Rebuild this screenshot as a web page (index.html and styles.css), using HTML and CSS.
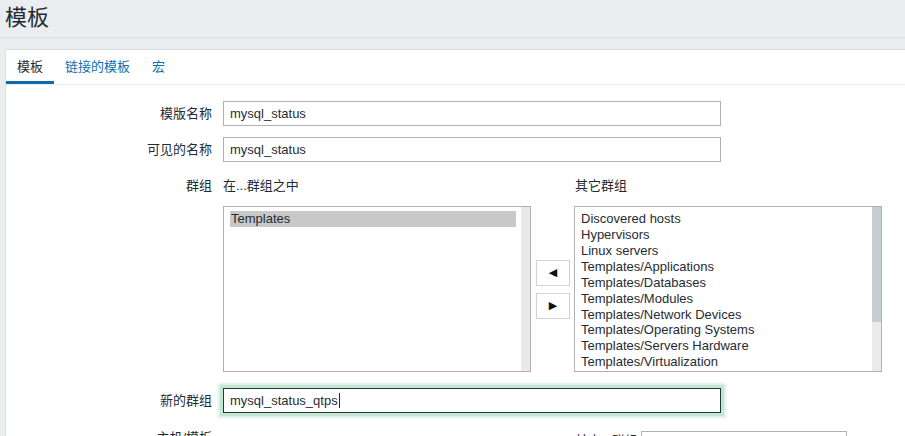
FILE: index.html
```html
<!DOCTYPE html>
<html lang="zh">
<head>
<meta charset="utf-8">
<title>模板</title>
<link rel="stylesheet" href="styles.css">
</head>
<body>
<header class="page-header">
  <h1 class="page-title">模板</h1>
</header>
<main class="panel">
  <nav class="tabs">
    <span class="tab tab-active">模板</span>
    <a class="tab" href="#">链接的模板</a>
    <a class="tab" href="#">宏</a>
  </nav>
  <form class="form">
    <div class="row row-input">
      <label class="label">模版名称</label>
      <div class="field"><div class="input">mysql_status</div></div>
    </div>
    <div class="row row-input row-second">
      <label class="label">可见的名称</label>
      <div class="field"><div class="input">mysql_status</div></div>
    </div>
    <div class="row row-groups">
      <label class="label label-top">群组</label>
      <div class="field">
        <div class="tween">
          <div class="caption">在...群组之中</div>
          <div class="tween-gap"></div>
          <div class="caption caption-right">其它群组</div>
          <div class="listbox">
            <div class="list-items">
              <div class="item item-selected">Templates</div>
            </div>
            <div class="scroll scroll-empty"></div>
          </div>
          <div class="move-buttons">
            <button class="move-btn" type="button">&#9664;</button>
            <button class="move-btn" type="button">&#9654;</button>
          </div>
          <div class="listbox">
            <div class="list-items">
              <div class="item">Discovered hosts</div>
              <div class="item">Hypervisors</div>
              <div class="item">Linux servers</div>
              <div class="item">Templates/Applications</div>
              <div class="item">Templates/Databases</div>
              <div class="item">Templates/Modules</div>
              <div class="item">Templates/Network Devices</div>
              <div class="item">Templates/Operating Systems</div>
              <div class="item">Templates/Servers Hardware</div>
              <div class="item">Templates/Virtualization</div>
            </div>
            <div class="scroll"><div class="thumb"></div></div>
          </div>
        </div>
      </div>
    </div>
    <div class="row row-input row-newgroup">
      <label class="label">新的群组</label>
      <div class="field"><div class="input input-focus">mysql_status_qtps<span class="caret"></span></div></div>
    </div>
    <div class="row row-hosts">
      <label class="label label-top">主机/模板</label>
      <div class="field">
        <div class="hosts-line">
          <div class="hosts-spacer"></div>
          <div class="hosts-other">其它 | 群组</div>
          <div class="hosts-select"></div>
        </div>
      </div>
    </div>
  </form>
</main>
</body>
</html>
```

FILE: styles.css
```css
* { box-sizing: border-box; }
html, body { margin: 0; padding: 0; }
body {
  background: #ebeef0;
  font-family: "Liberation Sans", "Noto Sans CJK SC", sans-serif;
  font-size: 13px;
  color: #1f2c33;
  padding-left: 5px;
  overflow: hidden;
  height: 436px;
}
.page-header {
  height: 39px;
  border-bottom: 2px solid #dfe3e6;
  margin-left: -5px;
  padding-left: 5px;
}
.page-title {
  margin: 0;
  padding-top: 4px;
  font-size: 22px;
  line-height: 28px;
  font-weight: normal;
  color: #1f2c33;
}
.panel {
  margin-top: 10px;
  background: #ffffff;
  border-top: 1px solid #dcdfe1;
  border-left: 1px solid #dcdfe1;
  height: 387px;
  overflow: hidden;
}
.tabs {
  display: flex;
  height: 35px;
  border-bottom: 1px solid #ebeef0;
}
.tab {
  display: block;
  padding: 0 11px;
  line-height: 33px;
  height: 34px;
  color: #0f70b0;
  text-decoration: none;
}
.tab-active {
  color: #1f2c33;
  box-shadow: inset 0 -3px 0 #0f6aa8;
}
.form { padding-top: 16px; }
.row {
  display: grid;
  grid-template-columns: 206px 1fr;
  column-gap: 11px;
}
.label {
  text-align: right;
  line-height: 25px;
  white-space: nowrap;
}
.label-top { line-height: 16px; }
.row-input { height: 25px; }
.row-second { margin-top: 11px; }
.row-groups { margin-top: 16px; }
.row-newgroup { margin-top: 16px; }
.row-hosts { margin-top: 17px; }
.input {
  width: 498px;
  height: 25px;
  border: 1px solid #b1b1b1;
  padding: 0 6px;
  line-height: 23px;
  background: #fff;
}
.input-focus {
  border-color: #22383c;
  box-shadow: 0 0 0 3px #c6e6d4, 0 0 2px 5px #dcf0e5;
}
.caret {
  display: inline-block;
  width: 1px;
  height: 15px;
  background: #1f2c33;
  vertical-align: -3px;
  margin-left: 1px;
}
.tween {
  display: grid;
  grid-template-columns: 308px 43px 308px;
  grid-template-rows: 16px 166px;
  row-gap: 12px;
}
.caption { line-height: 16px; }
.caption-right { padding-left: 1px; }
.listbox {
  display: flex;
  border: 1px solid #b1b1b1;
  height: 166px;
  background: #fff;
}
.list-items {
  flex: 1;
  padding: 4px 5px 0 6px;
}
.item {
  line-height: 15.93px;
  height: 15.93px;
  white-space: nowrap;
}
.item-selected { background: #c8c8c8; padding-left: 1px; line-height: 16px; height: 16px; }
.scroll {
  width: 9px;
  background: #ebebeb;
}
.scroll-empty { background: #e9e9e9; }
.thumb {
  height: 115px;
  background: #c4ced4;
}
.move-buttons {
  display: flex;
  flex-direction: column;
  justify-content: center;
  gap: 7px;
  padding-left: 5px;
}
.move-btn {
  width: 34px;
  height: 26px;
  border: 1px solid #d2d2d2;
  background: #fff;
  font-size: 11px;
  color: #111;
  padding: 0;
  font-family: "DejaVu Sans", sans-serif;
}
.hosts-line {
  display: flex;
  align-items: flex-start;
}
.hosts-spacer { width: 352px; }
.hosts-other {
  width: 66px;
  line-height: 18px;
  padding-top: 2px;
}
.hosts-select {
  width: 206px;
  height: 25px;
  border: 1px solid #b1b1b1;
  margin-top: 1px;
}
```
